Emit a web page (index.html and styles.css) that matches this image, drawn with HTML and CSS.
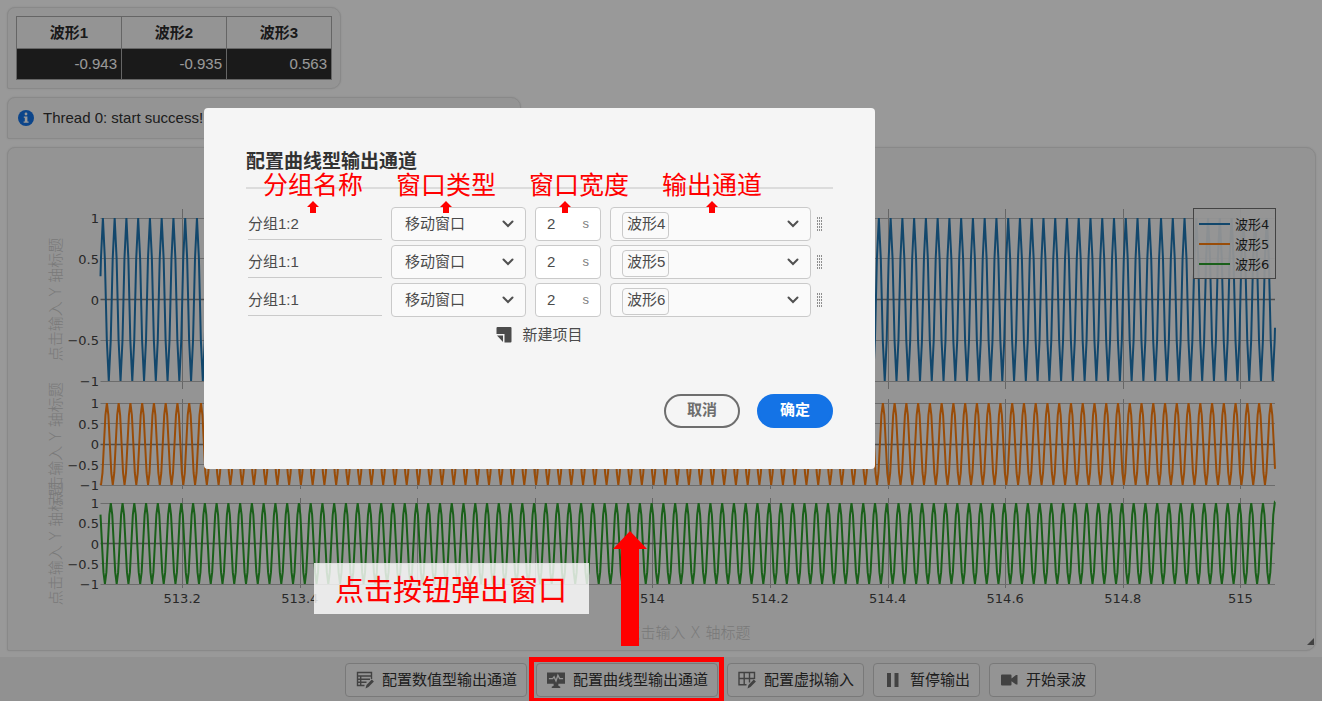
FILE: index.html
```html
<!DOCTYPE html>
<html lang="zh-CN">
<head>
<meta charset="utf-8">
<title>波形监视</title>
<link rel="stylesheet" href="styles.css">
</head>
<body>
<div class="app">
  <main class="board">
    <section class="panel panel-values">
      <table class="values">
        <thead><tr><th>波形1</th><th>波形2</th><th>波形3</th></tr></thead>
        <tbody><tr><td>-0.943</td><td>-0.935</td><td>0.563</td></tr></tbody>
      </table>
    </section>
    <section class="panel panel-status">
      <svg class="info" viewBox="0 0 16 16"><circle cx="8" cy="8" r="8" fill="#1473e6"/><circle cx="8" cy="4" r="1.4" fill="#fff"/><path d="M5.8 6.4h3.6v5h1.2v1.4H5.6v-1.4h1.2V7.8h-1z" fill="#fff"/></svg>
      <span>Thread 0: start success!</span>
    </section>
    <section class="panel panel-chart">
      <svg class="chart" id="chart" viewBox="8 148 1307 502"></svg>
    </section>
  </main>
  <footer class="toolbar">
    <button class="tool" type="button"><svg class="tool-icon" viewBox="0 0 18 18" fill="none" stroke="#6e6e6e" stroke-width="1.4"><path d="M8.500 14.500H1.500V1.500h14v6.500M1.500 5h14M1.500 8.200h12.500M1.500 11.300h9M4.700 5v9.500"/><path d="M9.500 17.500l1-3.500 5.300-5.600 2.100 2.100-5.400 5.500z" fill="#6e6e6e" stroke="none"/></svg>配置数值型输出通道</button>
    <button class="tool" type="button"><svg class="tool-icon" viewBox="0 0 19 18"><path d="M0 1h19v12h-7v2l2 1v1.500H5V16l2-1v-2H0z" fill="#6e6e6e"/><path d="M2 7.500h4l1.500-2 2 4.500 2-6 1.800 3.500H17" fill="none" stroke="#f7f7f7" stroke-width="1.400"/></svg>配置曲线型输出通道</button>
    <button class="tool" type="button"><svg class="tool-icon" viewBox="0 0 18 18" fill="none" stroke="#6e6e6e" stroke-width="1.400"><path d="M8.500 13.800H1V1.500h15.500v6.500M1 7.500h15.500M6.200 1.500v12.300M11.500 1.500v10"/><path d="M9.500 17.500l1-3.500 5.300-5.600 2.100 2.100-5.400 5.500z" fill="#6e6e6e" stroke="none"/></svg>配置虚拟输入</button>
    <button class="tool" type="button"><svg class="tool-icon" viewBox="0 0 18 18"><path d="M3 2h4v14H3zM10.500 2h4v14h-4z" fill="#6e6e6e"/></svg>暂停输出</button>
    <button class="tool" type="button"><svg class="tool-icon" viewBox="0 0 18 18"><path d="M2 3.500h8.500q1 0 1 1v3L16 4h1.500v9.500H16l-4.500-3.300v3.300q0 1-1 1H2q-1 0-1-1v-9q0-1 1-1z" fill="#6e6e6e"/></svg>开始录波</button>
  </footer>
  <div class="underlay"></div>

  <form class="dialog" role="dialog" aria-labelledby="dlg-title">
    <h2 class="dialog-title" id="dlg-title">配置曲线型输出通道</h2>
    <div class="rows">
      <div class="row">
        <input class="name" aria-label="分组名称" value="分组1:2">
        <div class="pick"><select class="select" aria-label="窗口类型"><option>移动窗口</option></select><svg class="chev" viewBox="0 0 12 8"><path d="M1.500 1.500L6 6l4.500-4.500"/></svg></div>
        <label class="width"><input class="num" aria-label="窗口宽度" value="2"><span class="unit">s</span></label>
        <div class="channel"><div class="pick pick-tag"><select class="select" aria-label="输出通道"><option>波形4</option></select><svg class="chev" viewBox="0 0 12 8"><path d="M1.500 1.500L6 6l4.500-4.500"/></svg></div><span class="grip"></span></div>
      </div>
      <div class="row">
        <input class="name" aria-label="分组名称" value="分组1:1">
        <div class="pick"><select class="select" aria-label="窗口类型"><option>移动窗口</option></select><svg class="chev" viewBox="0 0 12 8"><path d="M1.500 1.500L6 6l4.500-4.500"/></svg></div>
        <label class="width"><input class="num" aria-label="窗口宽度" value="2"><span class="unit">s</span></label>
        <div class="channel"><div class="pick pick-tag"><select class="select" aria-label="输出通道"><option>波形5</option></select><svg class="chev" viewBox="0 0 12 8"><path d="M1.500 1.500L6 6l4.500-4.500"/></svg></div><span class="grip"></span></div>
      </div>
      <div class="row">
        <input class="name" aria-label="分组名称" value="分组1:1">
        <div class="pick"><select class="select" aria-label="窗口类型"><option>移动窗口</option></select><svg class="chev" viewBox="0 0 12 8"><path d="M1.500 1.500L6 6l4.500-4.500"/></svg></div>
        <label class="width"><input class="num" aria-label="窗口宽度" value="2"><span class="unit">s</span></label>
        <div class="channel"><div class="pick pick-tag"><select class="select" aria-label="输出通道"><option>波形6</option></select><svg class="chev" viewBox="0 0 12 8"><path d="M1.500 1.500L6 6l4.500-4.500"/></svg></div><span class="grip"></span></div>
      </div>
    </div>
    <button class="add" type="button"><svg class="add-icon" viewBox="0 0 16 16" fill="#4b4b4b"><path d="M1.500 0h13q1 0 1 1v13.500q0 1-1 1H8.500V7H.5V1q0-1 1-1z"/><path d="M1 8.500h6V15z"/></svg>新建项目</button>
    <div class="actions">
      <button class="pill" type="button">取消</button>
      <button class="pill pill-primary" type="submit">确定</button>
    </div>
  </form>

  <div class="note note-name">分组名称<svg class="tip" viewBox="0 0 12 12"><path d="M6 0l6 6H9v6H3V6H0z"/></svg></div>
  <div class="note note-type">窗口类型<svg class="tip" viewBox="0 0 12 12"><path d="M6 0l6 6H9v6H3V6H0z"/></svg></div>
  <div class="note note-width">窗口宽度<svg class="tip" viewBox="0 0 12 12"><path d="M6 0l6 6H9v6H3V6H0z"/></svg></div>
  <div class="note note-channel">输出通道<svg class="tip" viewBox="0 0 12 12"><path d="M6 0l6 6H9v6H3V6H0z"/></svg></div>
  <div class="callout">点击按钮弹出窗口</div>
  <svg class="arrow" viewBox="0 0 34 115"><path d="M17 0l17 18h-8v97H8V18H0z"/></svg>
  <div class="frame"></div>
</div>
<script src="chart.js"></script>
</body>
</html>
```
FILE: styles.css
```css
* { box-sizing: border-box; }
body {
  margin: 0;
  background: #fff;
  color: #323232;
  font: 15px/20px "Liberation Sans", "Noto Sans CJK SC", sans-serif;
}
button, input, select { font: inherit; color: inherit; }

.app {
  position: relative;
  display: flex;
  flex-direction: column;
  min-height: calc(100vh - 2px);
}
.board {
  flex: 1;
  display: flex;
  flex-direction: column;
  align-items: flex-start;
  gap: 8px;
  padding: 7px 6px 6px 7px;
}
.panel {
  background: #f7f7f7;
  border: 1px solid #e4e4e4;
  border-radius: 8px 10px 10px 2px;
  box-shadow: 0 0 2px #e4e4e4;
}
.panel-values { padding: 8px; }
.values { border-collapse: collapse; table-layout: fixed; width: 316px; }
.values th, .values td { height: 32px; border: 1px solid #a8a8a8; padding: 0 4px; }
.values th { font-weight: 700; color: #2c2c2c; }
.values td { height: 31px; background: #2c2c2c; color: #fff; text-align: right; }

.panel-status {
  width: 514px;
  height: 42px;
  display: flex;
  align-items: center;
  gap: 9px;
  padding: 0 10px;
}
.info { width: 16px; height: 16px; }

.panel-chart { align-self: stretch; flex: 1; }
.chart { display: block; width: 100%; }
.tick { font: 13px "DejaVu Sans", sans-serif; fill: #444; }
.axis-title { font: 300 15px "DejaVu Sans", "Noto Sans CJK SC", sans-serif; fill: #cacaca; text-anchor: middle; }
.legend-text { font: 13px "DejaVu Sans", "Noto Sans CJK SC", sans-serif; fill: #2a2a2a; }

.toolbar {
  display: flex;
  gap: 9px;
  padding: 6px 8px 4px 345px;
  background: #f2f2f2;
}
.tool {
  display: flex;
  align-items: center;
  gap: 8px;
  height: 34px;
  padding: 0 9px 0 10px;
  border: 1px solid #cacaca;
  border-radius: 4px;
  background: #f7f7f7;
  white-space: nowrap;
}
.tool-icon { width: 18px; height: 18px; flex: none; }
.underlay { position: absolute; inset: 0; background: rgba(0, 0, 0, .4); }

.dialog {
  position: absolute;
  left: 204px;
  top: 108px;
  width: 671px;
  padding: 41px 42px 41px;
  background: #f5f5f5;
  border-radius: 4px;
  color: #4b4b4b;
}
.dialog-title {
  margin: 0;
  height: 40px;
  border-bottom: 2px solid #dcdcdc;
  font-size: 19px;
  line-height: 26px;
  color: #323232;
}
.rows { display: grid; gap: 4px; padding: 18px 0 0 2px; }
.row { display: grid; grid-template-columns: 134px 135px 66px 1fr; gap: 9px; height: 34px; }
.name {
  width: 100%;
  height: 33px;
  padding: 0 0 2px;
  border: 0;
  border-bottom: 1px solid #cacaca;
  background: none;
}
.pick { position: relative; flex: 1; }
.select {
  appearance: none;
  width: 100%;
  height: 34px;
  padding: 0 13px;
  border: 1px solid #cacaca;
  border-radius: 4px;
  background: #fafafa;
}
.pick-tag .select { padding-left: 16px; }
.pick-tag::before {
  content: "";
  position: absolute;
  left: 12px;
  top: 5px;
  width: 45px;
  height: 25px;
  border: 1px solid #cacaca;
  border-radius: 4px;
  pointer-events: none;
}
.chev {
  position: absolute;
  right: 12px;
  top: 13px;
  width: 12px;
  height: 8px;
  fill: none;
  stroke: #505050;
  stroke-width: 2;
  stroke-linecap: round;
  pointer-events: none;
}
.width {
  display: flex;
  align-items: center;
  justify-content: space-between;
  padding: 0 11px;
  border: 1px solid #cacaca;
  border-radius: 4px;
  background: #fff;
}
.num { width: 24px; padding: 0; border: 0; background: none; }
.unit { font-size: 13px; color: #808080; }
.channel { display: flex; align-items: center; gap: 6px; padding-right: 10px; }
.grip {
  width: 6px;
  height: 15px;
  background:
    linear-gradient(transparent 2px, #f5f5f5 2px) 0 0 / 6px 3px,
    linear-gradient(90deg, #8e8e8e 1px, transparent 1px) 0 0 / 2px 3px;
}
.add {
  display: flex;
  align-items: center;
  gap: 10px;
  margin: 8px auto 0;
  padding: 0;
  border: 0;
  background: none;
}
.add-icon { width: 16px; height: 16px; }
.actions { display: flex; justify-content: flex-end; gap: 17px; padding-top: 49px; }
.pill {
  width: 76px;
  height: 34px;
  padding: 0 0 2px;
  border: 2px solid #6e6e6e;
  border-radius: 17px;
  background: none;
  font-weight: 700;
  color: #6e6e6e;
}
.pill-primary { border-color: #1473e6; background: #1473e6; color: #fff; }

.note {
  position: absolute;
  top: 169px;
  display: flex;
  flex-direction: column;
  align-items: center;
  gap: 3px;
  color: #f00;
  font: 25px/29px "Noto Sans CJK SC", sans-serif;
}
.tip { width: 12px; height: 12px; fill: #f00; }
.note-name { left: 263px; }
.note-type { left: 396px; }
.note-width { left: 529px; }
.note-width .tip { align-self: flex-start; margin-left: 30px; }
.note-channel { left: 662px; }
.callout {
  position: absolute;
  left: 314px;
  top: 563px;
  padding: 10px 22px 10px 21px;
  background: rgba(255, 255, 255, .8);
  color: #f00;
  font: 29px/31px "Noto Sans CJK SC", sans-serif;
}
.arrow { position: absolute; left: 613px; top: 531px; width: 34px; height: 115px; fill: #f00; }
.frame { position: absolute; left: 529px; top: 657px; width: 195px; height: 46px; border: 5px solid #f00; }
```
FILE: chart.js
```js
const NS = "http://www.w3.org/2000/svg";
const chart = document.getElementById("chart");

function add(tag, attrs, text) {
  const el = document.createElementNS(NS, tag);
  for (const k in attrs) el.setAttribute(k, attrs[k]);
  if (text) el.textContent = text;
  chart.appendChild(el);
}

const left = 100.5, right = 1275, period = 11.757, perTick = 117.57, firstTick = 182.2;
const plots = [
  { mid: 299.5, amp: 81.5, top: 209, bottom: 389, peak: 102.9, samples: 6, color: "#1f77b4", label: "波形4" },
  { mid: 444, amp: 41, top: 399, bottom: 489, peak: 106.9, samples: 8, color: "#ff7f0e", label: "波形5" },
  { mid: 543.5, amp: 40.5, top: 498, bottom: 588, peak: 110.8, samples: 8, color: "#2ca02c", label: "波形6" }
];

for (const p of plots) {
  for (let i = 0; i < 10; i++) {
    const x = Math.round(firstTick + i * perTick) + 0.5;
    add("path", { d: `M${x} ${p.top}V${p.bottom}`, stroke: "#aaa" });
  }
  for (const v of [1, 0.5, 0, -0.5, -1]) {
    const y = p.mid - v * p.amp;
    add("path", { d: `M${left} ${Math.floor(y) + 0.5}H${right}`, stroke: v ? "#b4b4b4" : "#808080", "stroke-width": v ? 1 : 1.5 });
    add("text", { x: 99, y: y + 5, "text-anchor": "end", class: "tick" }, String(v).replace("-", "−"));
  }
  const point = x => `${x.toFixed(2)} ${(p.mid - p.amp * Math.cos((x - p.peak) / period * 2 * Math.PI)).toFixed(2)}`;
  const step = period / p.samples;
  let d = "M" + point(left);
  for (let x = p.peak - step * Math.floor((p.peak - left) / step); x < right; x += step) d += "L" + point(x);
  d += "L" + point(right);
  add("path", { d, fill: "none", stroke: p.color, "stroke-width": 2 });
  add("text", { class: "axis-title", transform: `translate(61 ${p.mid}) rotate(-90)` }, "点击输入 Y 轴标题");
}

for (const i of [0, 1, 4, 5, 6, 7, 8, 9]) {
  const value = String(Math.round(5132 + i * 2) / 10);
  add("text", { x: firstTick + i * perTick, y: 603, "text-anchor": "middle", class: "tick" }, value);
}
add("text", { x: 688, y: 638, class: "axis-title" }, "点击输入 X 轴标题");

add("rect", { x: 1193.5, y: 208.5, width: 82, height: 70, fill: "#f7f7f7", "fill-opacity": 0.93, stroke: "#707070" });
plots.forEach((p, i) => {
  const y = 224 + i * 20;
  add("path", { d: `M1199 ${y}H1230`, stroke: p.color, "stroke-width": 2 });
  add("text", { x: 1235, y: y + 5, class: "legend-text" }, p.label);
});
add("path", { d: "M1314 638V645H1307Z", fill: "#6e6e6e" });
```
